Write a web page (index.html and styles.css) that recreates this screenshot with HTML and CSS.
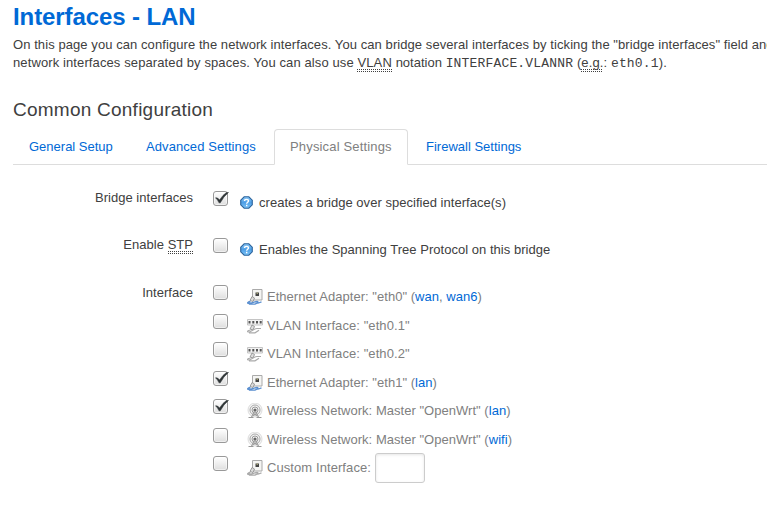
FILE: index.html
```html
<!DOCTYPE html>
<html lang="en">
<head>
<meta charset="utf-8">
<title>Interfaces - LAN</title>
<link rel="stylesheet" href="styles.css">
</head>
<body>
<svg class="defs" aria-hidden="true">
  <defs>
    <linearGradient id="blue" x2="0" y2="1"><stop stop-color="#8cc8f6"/><stop offset=".5" stop-color="#4f9fe6"/><stop offset="1" stop-color="#7cc4f8"/></linearGradient>
    <symbol id="help" viewBox="0 0 14 14">
      <path d="M4.500.8h5l3.700 3.700v5l-3.700 3.700h-5L.8 9.500v-5z" fill="url(#blue)" stroke="#2b639c" stroke-width="1.200"/>
      <path d="M4.900 5.400Q4.900 3.600 7 3.600T9.100 5.300C9.100 6.800 7.200 6.600 7.200 8.300M7.200 9.500v1.500" fill="none" stroke="#fff" stroke-width="1.500"/>
    </symbol>
    <symbol id="ether" viewBox="0 0 16 16">
      <path d="M5.500.5h9.500v10.500h-9.500z" fill="#f4f4f2" stroke="#aaa"/>
      <path d="M8.500 3.500h3.500v3.500H8.500z" fill="#444"/><path d="M9.500 3.500h1.500v1.500h-1.500z" fill="#9a9a70"/>
      <path d="M5 7.500l2.500 1.500-1.500 3.500-3-1z" fill="#ddd" stroke="#888" stroke-width=".8"/>
      <path class="cable" d="M3.500 12.500C.5 13-.5 14.500 2 14.500S8 12.500 10 12.500s0 2 1.500 1.500l3-1.200M2 15.200h6l3-1.500" fill="none" stroke-width="1.300"/>
    </symbol>
    <symbol id="vlan" viewBox="0 0 16 16">
      <path d="M.5 1.500h15v5.500H.5z" fill="#f2f2f2" stroke="#c4c4c4"/>
      <path d="M1.500 3h2v2.500h-2zM5.300 3h2v2.500h-2zM9 3h2v2.500H9zM12.700 3h2v2.500h-2z" fill="#555"/>
      <path d="M5 7l2.500 1.500-1.500 3.500-3-1z" fill="#ddd" stroke="#888" stroke-width=".8"/>
      <path d="M3.500 12C.5 12.500-.5 14 2 14S7 10.500 10 10.500h4M2 14.800h6l4-2.500" fill="none" stroke="#aaa" stroke-width="1.200"/>
    </symbol>
    <symbol id="wifi" viewBox="0 0 16 16">
      <g fill="#f4f4f4" stroke="#bbb"><circle cx="8" cy="7" r="7" stroke="#ddd"/><circle cx="8" cy="7" r="5" stroke="#aaa"/><circle cx="8" cy="7" r="3" stroke="#999"/></g>
      <circle cx="8" cy="7" r="1.600" fill="#666"/>
      <path d="M7.500 8L4.500 14M8.500 8l3 6M6.500 10.500L10.500 13M9.500 10.500L5.500 13M1.500 14.500h5M9.500 14.500h5" fill="none" stroke="#999"/>
    </symbol>
    <symbol id="check" viewBox="0 0 15 13"><path d="M1.500 5.800Q3.500 5 5.500 8 9 2.500 12.500.5h2Q9.500 4.500 6.300 10.800H5Q3.500 7.500 1.500 5.800z" fill="#2e3436" stroke="#2e3436" stroke-width=".5"/></symbol>
  </defs>
</svg>
<main>
  <h2>Interfaces - LAN</h2>
  <div class="intro">
    <p class="l1">On this page you can configure the network interfaces. You can bridge several interfaces by ticking the "bridge interfaces" field and</p>
    <p class="l2">network interfaces separated by spaces. You can also use <abbr>VLAN</abbr> <span class="tight">notation</span> <code>INTERFACE.VLANNR</code> (<abbr class="eg">e.g.</abbr>: <code>eth0.1</code>).</p>
  </div>
  <h3>Common Configuration</h3>
  <nav>
    <a class="t1" href="#">General Setup</a><a class="t2" href="#">Advanced Settings</a><a class="t3 active" href="#">Physical Settings</a><a class="t4" href="#">Firewall Settings</a>
  </nav>
  <section class="field">
    <div class="label">Bridge interfaces</div>
    <span class="box"><svg><use href="#check"/></svg></span>
    <p class="hint"><svg><use href="#help"/></svg><span>creates a bridge over specified interface(s)</span></p>
  </section>
  <section class="field">
    <div class="label">Enable <abbr>STP</abbr></div>
    <span class="box"></span>
    <p class="hint"><svg><use href="#help"/></svg><span>Enables the Spanning Tree Protocol on this bridge</span></p>
  </section>
  <section class="field">
    <div class="label last">Interface</div>
    <div class="list">
      <div class="row r1"><span class="box"></span><svg class="icon blue"><use href="#ether"/></svg><span>Ethernet Adapter: "eth0" (<a href="#">wan</a>, <a href="#">wan6</a>)</span></div>
      <div class="row r2"><span class="box"></span><svg class="icon"><use href="#vlan"/></svg><span>VLAN Interface: "eth0.1"</span></div>
      <div class="row r2"><span class="box"></span><svg class="icon"><use href="#vlan"/></svg><span>VLAN Interface: "eth0.2"</span></div>
      <div class="row"><span class="box"><svg><use href="#check"/></svg></span><svg class="icon blue"><use href="#ether"/></svg><span>Ethernet Adapter: "eth1" (<a href="#">lan</a>)</span></div>
      <div class="row"><span class="box"><svg><use href="#check"/></svg></span><svg class="icon"><use href="#wifi"/></svg><span>Wireless Network: Master "OpenWrt" (<a href="#">lan</a>)</span></div>
      <div class="row"><span class="box"></span><svg class="icon"><use href="#wifi"/></svg><span>Wireless Network: Master "OpenWrt" (<a href="#">wifi</a>)</span></div>
      <div class="row r2"><span class="box"></span><svg class="icon"><use href="#ether"/></svg><span>Custom Interface:</span><input type="text" aria-label="Custom Interface"></div>
    </div>
  </section>
</main>
</body>
</html>
```
FILE: styles.css
```css
* { box-sizing: border-box; }
body { margin: 0; height: 517px; overflow: hidden; background: #fff; color: #404040; font: 13px/18px "Liberation Sans", Arial, sans-serif; letter-spacing: .03px; }
main { padding-left: 13px; }
.defs { position: absolute; width: 0; height: 0; }
h2, h3, p { margin: 0; }
h2 { height: 36px; font-size: 24px; line-height: 33px; color: #0069d6; letter-spacing: -.1px; }
.intro { height: 55px; white-space: nowrap; }
.l1 { overflow: hidden; letter-spacing: .075px; }
.l2 { letter-spacing: .11px; }
.tight { letter-spacing: 0; }
h3 { height: 38px; font-size: 19px; line-height: 37px; font-weight: normal; letter-spacing: .24px; }
a { color: #0069d6; text-decoration: none; }
code { font: 13px/17px "Liberation Mono", monospace; letter-spacing: .17px; }
abbr { padding-bottom: 2px; background: repeating-linear-gradient(90deg, #404040 0 1px, transparent 1px 2px) 0 100% / 100% 1px no-repeat, repeating-linear-gradient(90deg, #404040 0 1px, transparent 1px 2px) 0 calc(100% - 2px) / 100% 1px no-repeat; }
nav { display: flex; height: 36px; border-bottom: 1px solid #ddd; }
nav a { flex: none; height: 36px; margin-right: 2px; padding: 0 15px; border: 1px solid transparent; line-height: 34px; white-space: nowrap; letter-spacing: 0; }
nav .active { background: #fff; border-color: #ddd #ddd #fff; border-radius: 4px 4px 0 0; color: #808080; letter-spacing: .16px; }
.t1 { width: 115px; }
.t2 { width: 142px; }
nav .t2 { letter-spacing: .08px; }
.t3 { width: 134px; }
.field { display: flex; align-items: flex-start; height: 47px; }
nav + .field { margin-top: 24px; }
.label { width: 180px; margin-right: 20px; text-align: right; }
.label.last { margin-top: 1px; }
.box { flex: none; width: 15px; height: 15px; margin-top: 2px; border: 1px solid #999; border-radius: 3px; background: linear-gradient(#fff, #dedede); box-shadow: inset 0 0 0 1px rgba(255,255,255,.5); }
.box svg { display: block; width: 15px; height: 13px; margin: 0; overflow: visible; }
.hint { display: flex; margin: 5px 0 0 12px; }
.hint svg { width: 13px; height: 13px; margin: 2px 6px 0 0; }
.list { color: #808080; }
.row { display: flex; height: 28.500px; }
.r1 { letter-spacing: .03px; }
.r2 { letter-spacing: .08px; }
.icon { --cable: #aaa; flex: none; width: 16px; height: 16px; margin: 6px 4px 0 19px; }
.icon.blue { --cable: #5a8fd0; }
.cable { stroke: var(--cable); }
.row > span:not(.box) { margin-top: 5px; }
input { width: 50px; height: 30px; margin: -1px 0 0 4px; border: 1px solid #ccc; border-radius: 3px; background: #fff; box-shadow: inset 0 1px 3px rgba(0,0,0,.1); }
```
